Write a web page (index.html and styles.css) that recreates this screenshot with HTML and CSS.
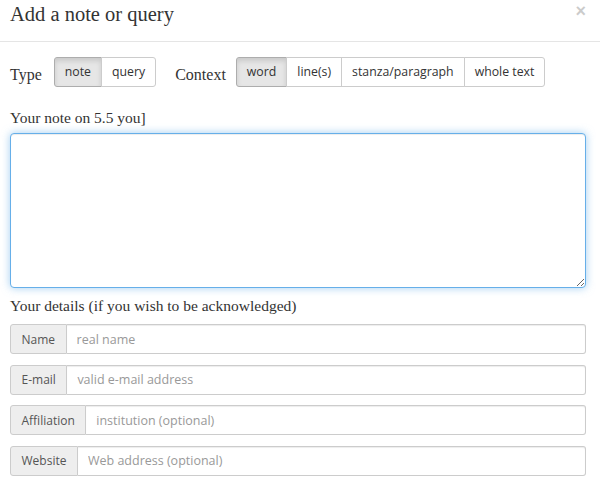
FILE: index.html
```html
<!DOCTYPE html>
<html>
<head>
<meta charset="utf-8">
<link rel="stylesheet" href="styles.css">
</head>
<body>
<div class="modal">
  <div class="modal-header">
    <h4 class="title">Add a note or query</h4>
    <span class="close">×</span>
  </div>
  <div class="modal-body">
    <div class="toolbar">
      <span class="lbl">Type</span>
      <div class="btn-group">
        <span class="btn active">note</span>
        <span class="btn">query</span>
      </div>
      <span class="lbl ctx">Context</span>
      <div class="btn-group">
        <span class="btn active">word</span>
        <span class="btn">line(s)</span>
        <span class="btn">stanza/paragraph</span>
        <span class="btn">whole text</span>
      </div>
    </div>
    <div class="section-label note-label">Your note on 5.5 you]</div>
    <textarea class="note-box"></textarea>
    <div class="section-label details-label">Your details (if you wish to be acknowledged)</div>
    <div class="input-group"><span class="addon">Name</span><input class="field" placeholder="real name"></div>
    <div class="input-group"><span class="addon">E-mail</span><input class="field" placeholder="valid e-mail address"></div>
    <div class="input-group"><span class="addon">Affiliation</span><input class="field" placeholder="institution (optional)"></div>
    <div class="input-group"><span class="addon">Website</span><input class="field" placeholder="Web address (optional)"></div>
  </div>
</div>
</body>
</html>
```
FILE: styles.css
```css
* { box-sizing: border-box; }
html, body { margin: 0; padding: 0; background: #fff; }
body { font-family: "Open Sans", "Liberation Sans", sans-serif; color: #333; }
.modal { width: 600px; }
.modal-header {
  height: 42px;
  border-bottom: 1px solid #e5e5e5;
  display: flex;
  justify-content: space-between;
  align-items: flex-start;
  padding: 0 14px 0 10px;
}
.title {
  margin: 0;
  font-family: "Liberation Serif", "DejaVu Serif", serif;
  font-weight: normal;
  font-size: 20.5px;
  line-height: 28px;
  color: #333;
}
.close {
  font-family: "Liberation Sans", sans-serif;
  font-size: 18px;
  font-weight: bold;
  line-height: 20px;
  color: #000;
  opacity: .2;
  margin-top: 1px;
}
.modal-body { padding: 15px 14px 10px 10px; }
.toolbar { display: flex; align-items: center; height: 30px; }
.lbl {
  font-family: "Liberation Serif", "DejaVu Serif", serif;
  font-size: 16px;
  color: #333;
  margin-right: 12px;
  padding-top: 6px;
}
.ctx { margin-left: 19px; margin-right: 10px; }
.btn-group { display: flex; }
.btn {
  display: block;
  font-size: 12.3px;
  line-height: 18px;
  padding: 5px 10px 5px;
  border: 1px solid #ccc;
  background: #fff;
  color: #333;
  margin-left: -1px;
}
.btn:first-child { border-radius: 3px 0 0 3px; margin-left: 0; }
.btn:last-child { border-radius: 0 3px 3px 0; }
.btn.active {
  background: #e6e6e6;
  border-color: #adadad;
  box-shadow: inset 0 3px 5px rgba(0,0,0,.125);
}
.section-label {
  font-family: "Liberation Serif", "DejaVu Serif", serif;
  font-size: 15.5px;
  line-height: 20px;
  color: #333;
}
.note-label { margin-top: 21px; margin-bottom: 5px; }
.note-box {
  display: block;
  width: 576px;
  height: 155px;
  border: 1px solid #66afe9;
  border-radius: 4px;
  box-shadow: inset 0 1px 1px rgba(0,0,0,.075), 0 0 8px rgba(102,175,233,.6);
  outline: none;
  resize: vertical;
  margin: 0;
}
.details-label { margin-top: 8px; margin-bottom: 8px; }
.input-group {
  display: flex;
  width: 576px;
  height: 30px;
  margin-bottom: 10.5px;
}
.addon {
  font-size: 12px;
  color: #555;
  background: #eee;
  border: 1px solid #ccc;
  border-radius: 3px 0 0 3px;
  padding: 0 10.5px;
  display: flex;
  align-items: center;
}
.field {
  flex: 1;
  border: 1px solid #ccc;
  border-left: 0;
  border-radius: 0 3px 3px 0;
  font-family: "Open Sans", sans-serif;
  font-size: 12.5px;
  padding: 0 10px;
  color: #555;
  box-shadow: inset 0 1px 1px rgba(0,0,0,.075);
  outline: none;
}
.field::placeholder { color: #999; }
```
